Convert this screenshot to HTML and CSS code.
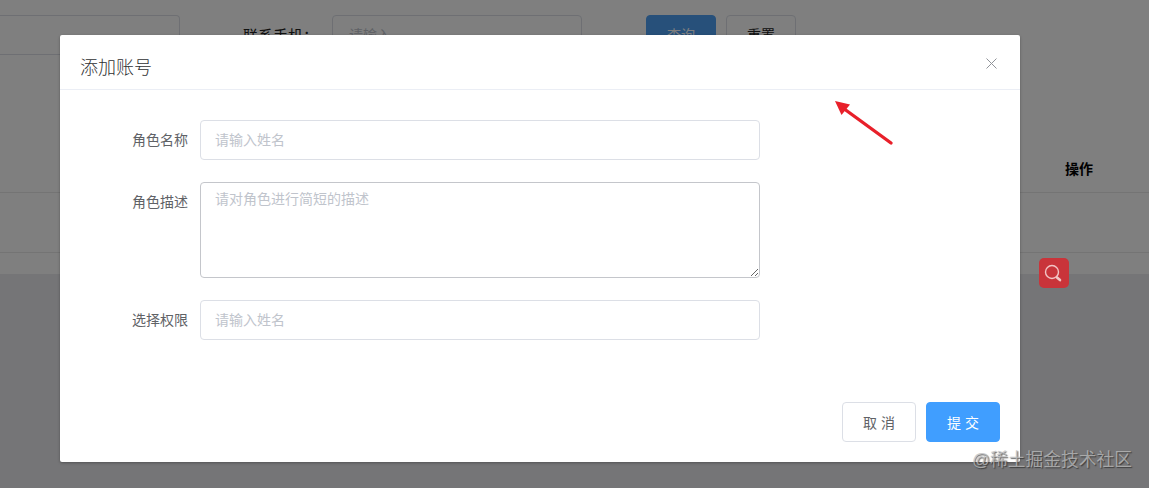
FILE: index.html
```html
<!DOCTYPE html>
<html lang="zh-CN">
<head>
<meta charset="utf-8">
<title>添加账号</title>
<link rel="stylesheet" href="styles.css">
</head>
<body>
<div class="page">
  <div class="filter">
    <div class="bg-input bg-input-first"></div>
    <span class="bg-label">联系手机：</span>
    <div class="bg-input bg-input-phone">请输入</div>
    <div class="bg-btn bg-btn-primary">查询</div>
    <div class="bg-btn">重置</div>
  </div>
  <div class="table-head"><span class="th-action">操作</span></div>
  <div class="table-row"></div>
</div>

<div class="mask"></div>

<div class="float-search">
  <svg width="30" height="30" viewBox="0 0 30 30" fill="none" stroke="#f2c4c4">
    <circle cx="13" cy="14" r="6.5" stroke-width="1.4"/>
    <path d="M18 19.5l3 2.6" stroke-width="2.6" stroke-linecap="round"/>
  </svg>
</div>

<div class="dialog">
  <div class="dialog-header">
    <span class="dialog-title">添加账号</span>
    <svg class="dialog-close" width="11" height="11" viewBox="0 0 11 11" stroke="#909399" stroke-width="1" fill="none">
      <path d="M.5.5l10 10M10.5.5l-10 10"/>
    </svg>
  </div>
  <div class="dialog-body">
    <div class="form-item">
      <label class="form-label">角色名称</label>
      <input class="form-input" placeholder="请输入姓名">
    </div>
    <div class="form-item">
      <label class="form-label form-label-top">角色描述</label>
      <textarea class="form-textarea" placeholder="请对角色进行简短的描述"></textarea>
    </div>
    <div class="form-item">
      <label class="form-label">选择权限</label>
      <input class="form-input" placeholder="请输入姓名">
    </div>
  </div>
  <div class="dialog-footer">
    <button class="btn">取 消</button>
    <button class="btn btn-primary">提 交</button>
  </div>
</div>

<svg class="arrow" width="70" height="56" viewBox="830 96 70 56">
  <path d="M845 109.5L891 143" stroke="#e8202a" stroke-width="3.4" stroke-linecap="round" fill="none"/>
  <path d="M835 101L850 104.5L841.5 115Z" fill="#e8202a"/>
</svg>

<div class="watermark">@稀土掘金技术社区</div>
</body>
</html>
```

FILE: styles.css
```css
* { box-sizing: border-box; }

html, body {
  margin: 0;
  height: 100%;
}

body {
  position: relative;
  overflow: hidden;
  width: 1149px;
  height: 488px;
  background: #eaebef;
  font-family: "Liberation Sans", "Noto Sans CJK SC", sans-serif;
  font-size: 14px;
}

.page {
  height: 274px;
  background: #fff;
  color: #333;
}

.filter {
  display: flex;
  align-items: flex-start;
  height: 70px;
  padding-top: 15px;
}

.bg-input {
  height: 40px;
  border: 1px solid #dcdfe6;
  border-radius: 4px;
  font-size: 14px;
  line-height: 38px;
  color: #c0c4cc;
}

.bg-input-first {
  width: 180px;
  border-left: 0;
  border-radius: 0 4px 4px 0;
}

.bg-label {
  margin-left: 63px;
  width: 89px;
  font-family: "Liberation Sans", "Noto Sans CJK TC", sans-serif;
  font-size: 15px;
  line-height: 38px;
  padding-top: 2px;
  color: #222;
}

.bg-input-phone {
  width: 250px;
  padding-left: 16px;
}

.bg-btn {
  width: 70px;
  height: 40px;
  margin-left: 10px;
  border: 1px solid #dcdfe6;
  border-radius: 4px;
  text-align: center;
  line-height: 38px;
  color: #222;
}

.bg-btn-primary {
  margin-left: 64px;
  background: #4ea0f5;
  border-color: #4ea0f5;
  color: #fff;
}

.table-head {
  display: flex;
  justify-content: flex-end;
  align-items: flex-end;
  height: 123px;
  padding: 0 56px 14px 0;
  border-bottom: 1px solid #e8e8e8;
}

.th-action {
  font-weight: 700;
  font-size: 14px;
  color: #000;
}

.table-row {
  height: 60px;
  border-bottom: 1px solid #e8e8e8;
}

.mask {
  position: absolute;
  inset: 0;
  background: rgba(0, 0, 0, .5);
}

.float-search {
  position: absolute;
  left: 1039px;
  top: 258px;
  width: 30px;
  height: 30px;
  border-radius: 5px;
  background: #c9343a;
}

.float-search svg { display: block; }

.dialog {
  position: absolute;
  left: 60px;
  top: 35px;
  display: flex;
  flex-direction: column;
  width: 960px;
  height: 427px;
  background: #fff;
  border-radius: 2px;
  box-shadow: 0 1px 3px rgba(0, 0, 0, .3);
}

.dialog-header {
  display: flex;
  justify-content: space-between;
  height: 55px;
  padding: 0 23px 0 20px;
  border-bottom: 1px solid #ebeef5;
}

.dialog-title {
  font-size: 18px;
  font-weight: 300;
  line-height: 66px;
  color: #303133;
}

.dialog-close { margin-top: 23px; }

.dialog-body {
  flex: 1;
  padding-top: 30px;
}

.form-item {
  display: flex;
  align-items: center;
  margin-bottom: 22px;
}

.form-label {
  width: 128px;
  margin-right: 12px;
  padding-bottom: 2px;
  text-align: right;
  font-size: 14px;
  color: #606266;
}

.form-label-top {
  align-self: flex-start;
  margin-top: 9px;
}

.form-input,
.form-textarea {
  display: block;
  width: 560px;
  border-radius: 4px;
  outline: 0;
  background: #fff;
  font-family: inherit;
  font-size: 14px;
  color: #606266;
}

.form-input {
  height: 40px;
  padding: 0 14px;
  border: 1px solid #dcdfe6;
}

.form-textarea {
  height: 96px;
  padding: 6px 14px;
  border: 1px solid #c4c6cb;
  line-height: 21px;
}

.form-input::placeholder,
.form-textarea::placeholder {
  color: #c0c4cc;
  opacity: 1;
}

.dialog-footer {
  display: flex;
  justify-content: flex-end;
  gap: 10px;
  padding: 0 20px 20px;
}

.btn {
  width: 74px;
  height: 40px;
  padding: 0;
  border: 1px solid #dcdfe6;
  border-radius: 4px;
  background: #fff;
  font-family: inherit;
  font-size: 14px;
  color: #606266;
}

.btn-primary {
  background: #409eff;
  border-color: #409eff;
  color: #fff;
}

.arrow {
  position: absolute;
  left: 830px;
  top: 96px;
}

.watermark {
  position: absolute;
  left: 972px;
  top: 446px;
  font-size: 17.75px;
  line-height: 28px;
  white-space: nowrap;
  color: rgba(190, 190, 190, .75);
  text-shadow: 1px 1px 1px rgba(40, 40, 40, .7);
}
```
